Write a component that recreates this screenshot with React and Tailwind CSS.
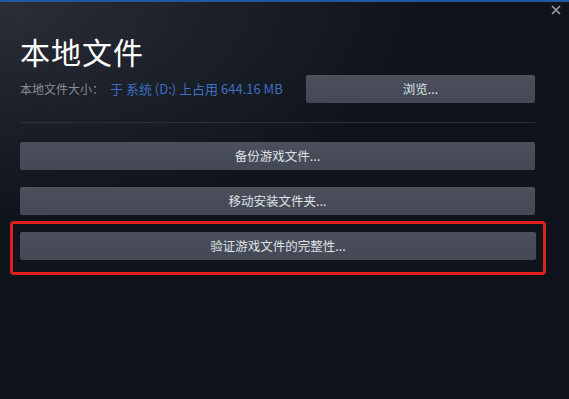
const FONT = { fontFamily: '"Noto Sans CJK SC", "Noto Sans", sans-serif' }

const ACTIONS = ['备份游戏文件...', '移动安装文件夹...']

function Btn({ children, className = '' }) {
  return (
    <button
      className={`h-[28px] rounded-[2px] bg-gradient-to-b from-[#4b505c] to-[#434854] text-[12.5px] text-[#dfe2e6] flex items-center justify-center ${className}`}
    >
      {children}
    </button>
  )
}

export default function App() {
  return (
    <div
      style={FONT}
      className="w-[569px] h-[399px] overflow-hidden border-t-2 border-[#1f5a9e] bg-[#0f141c] relative"
    >
      <div className="absolute inset-0 bg-[radial-gradient(ellipse_420px_220px_at_0%_0%,#2b2e38_0%,#1c2029_50%,#0f141c_100%)]" />

      {/* close */}
      <button className="absolute right-[7px] top-[2px] text-[#9aa0a8]">
        <svg width="12" height="12" viewBox="0 0 12 12" fill="none" stroke="currentColor" strokeWidth="1.6">
          <path d="M2 2l8 8M10 2l-8 8" />
        </svg>
      </button>

      <div className="relative pl-[20px] pr-[34px] pt-[29px]">
        <h1 className="text-[30px] leading-[40px] text-white tracking-[1px]">本地文件</h1>

        <div className="flex items-center mt-[4px]">
          <div className="w-[286px] text-[12px] leading-[28px] whitespace-nowrap">
            <span className="text-[#878d96]">本地文件大小：</span>
            <span className="ml-[6px] text-[13px] text-[#3d6fc4]">于 系统 (D:) 上占用 644.16 MB</span>
          </div>
          <Btn className="w-[229px]">浏览...</Btn>
        </div>

        <div className="h-px bg-[#2a2f39] mt-[19px]" />

        <div className="flex flex-col gap-[17px] mt-[19px]">
          {ACTIONS.map(a => (
            <Btn key={a} className="w-full">{a}</Btn>
          ))}
        </div>

        <div className="-ml-[10px] -mr-[11px] mt-[6px] border-[3px] border-[#e0201f] rounded-[4px] px-[7px] pt-[8px] pb-[12px]">
          <Btn className="w-full">验证游戏文件的完整性...</Btn>
        </div>
      </div>
    </div>
  )
}
